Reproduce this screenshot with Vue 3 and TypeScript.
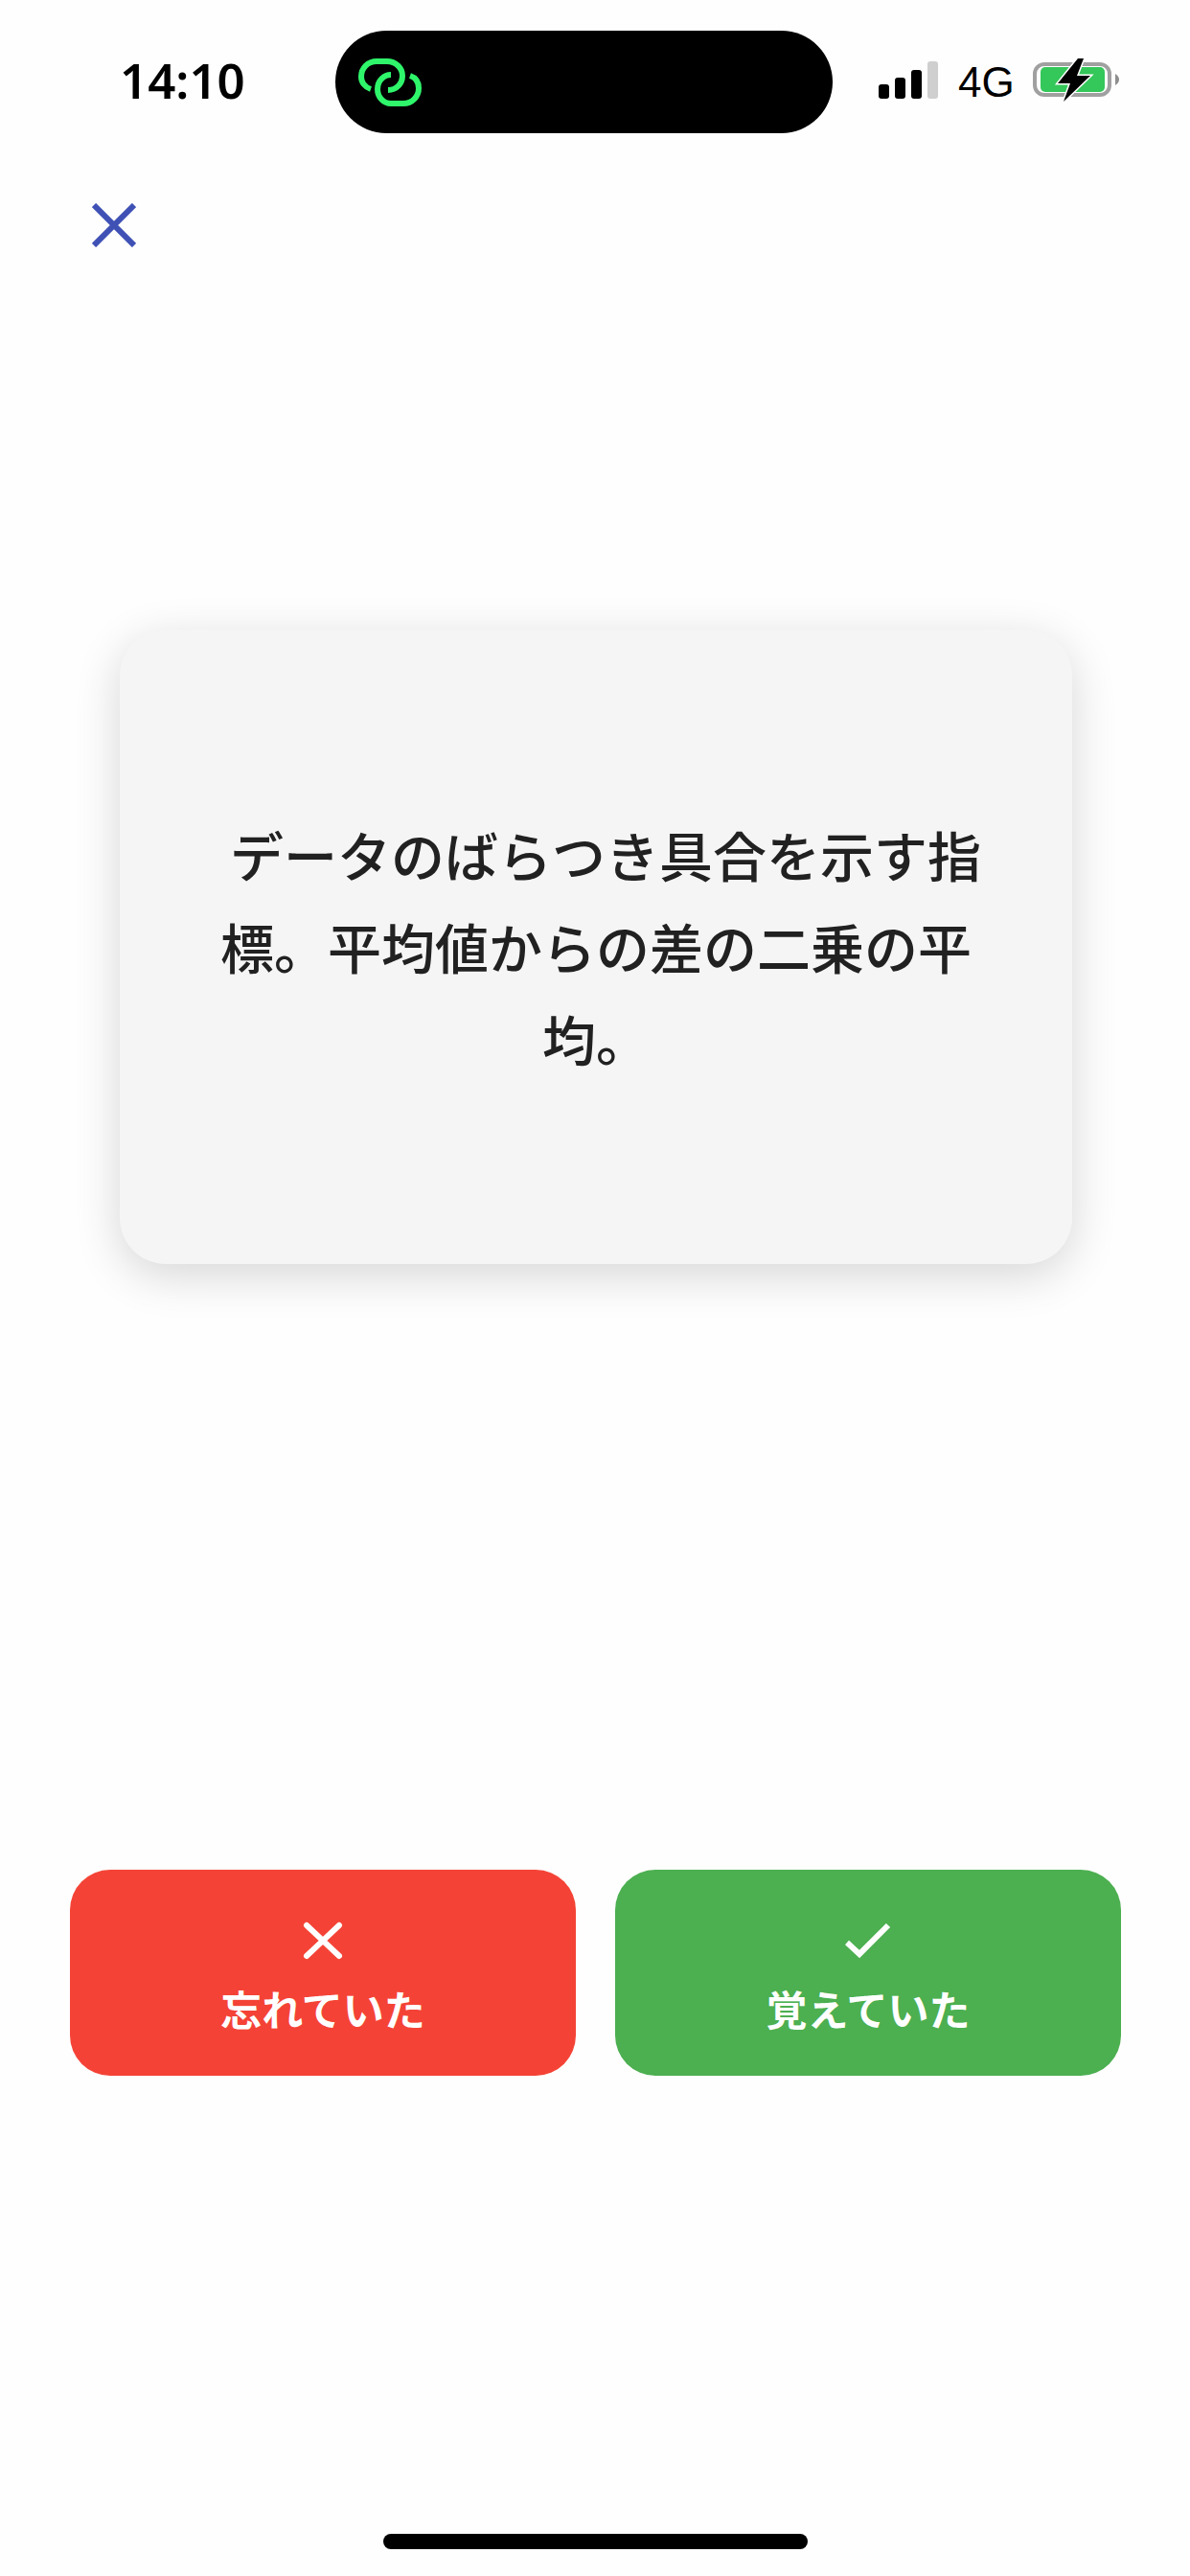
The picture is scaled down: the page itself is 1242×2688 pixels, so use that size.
<script setup lang="ts">
const barHeights = [15, 22, 30, 39]
const cardText = 'データのばらつき具合を示す指標。平均値からの差の二乗の平均。'
</script>

<template>
  <div class="screen">
    <header class="status-bar">
      <div class="time">14:10</div>
      <div class="island">
        <svg class="link-icon" viewBox="0 0 66 50" fill="none" stroke="#2ff56b" stroke-width="6">
          <path d="M13 32 C7 30 3 25 3 19 C3 10 10 3 19 3 H30 C39 3 46 10 46 18 C46 26 40 33 31 33" />
          <path d="M54 18 C60 20 63 25 63 31 C63 40 56 47 47 47 H34 C26 47 20 40 20 32 C20 23 27 17 34 17" />
        </svg>
      </div>
      <div class="status-right">
        <div class="signal">
          <span
            v-for="(h, i) in barHeights"
            :key="i"
            class="bar"
            :class="{ off: i === 3 }"
            :style="{ height: h + 'px' }"
          ></span>
        </div>
        <span class="net">4G</span>
        <svg class="battery" width="92" height="46" viewBox="0 0 92 46">
          <rect x="2" y="7" width="78" height="32" rx="10" fill="none" stroke="#a0a0a0" stroke-width="4" />
          <rect x="8" y="10" width="67" height="26" rx="5" fill="#34c759" />
          <path d="M86 17 C89 19 90 21 90 23 C90 25 89 27 86 29 Z" fill="#8e8e8e" />
          <path
            d="M47 1 L26 27 H39 L32 46 L60 19 H46 L53 1 Z"
            fill="#000"
            stroke="#fff"
            stroke-width="3"
            paint-order="stroke"
          />
        </svg>
      </div>
    </header>

    <div class="toolbar">
      <button class="close-btn" aria-label="閉じる">
        <svg width="46" height="46" viewBox="0 0 46 46" stroke="#3f51b5" stroke-width="6">
          <path d="M2 2 L44 44 M44 2 L2 44" />
        </svg>
      </button>
    </div>

    <main class="card-area">
      <div class="card">
        <p class="card-text">{{ cardText }}</p>
      </div>
    </main>

    <div class="actions">
      <button class="action forgot">
        <svg width="48" height="40" viewBox="0 0 48 40" fill="none" stroke="#fff" stroke-width="6" stroke-linecap="round">
          <path d="M7 4 L41 36 M41 4 L7 36" />
        </svg>
        <span>忘れていた</span>
      </button>
      <button class="action remembered">
        <svg width="48" height="40" viewBox="0 0 48 40" fill="none" stroke="#fff" stroke-width="6">
          <path d="M2 22 L15 34 L45 4" />
        </svg>
        <span>覚えていた</span>
      </button>
    </div>

    <div class="home-indicator"></div>
  </div>
</template>

<style>
html,
body {
  margin: 0;
  background: #fefefe;
}
</style>

<style scoped>
.screen {
  width: 1242px;
  height: 2688px;
  background: #fefefe;
  display: flex;
  flex-direction: column;
  font-family: Inter, "Noto Sans CJK JP", sans-serif;
  color: #000;
  overflow: hidden;
}

.status-bar {
  display: grid;
  grid-template-columns: 350px 519px 373px;
  align-items: center;
  padding-top: 32px;
  height: 107px;
  flex: none;
}

.time {
  padding: 0 0 6px 125px;
  font-size: 51px;
  font-weight: 600;
  font-family: "Noto Sans", sans-serif;
  line-height: 60px;
}

.island {
  height: 107px;
  background: #000;
  border-radius: 54px;
  display: flex;
  align-items: center;
  padding-left: 24px;
  box-sizing: border-box;
}

.link-icon {
  width: 66px;
  height: 50px;
}

.status-right {
  display: flex;
  align-items: center;
  padding: 0 0 5px 48px;
}

.signal {
  display: flex;
  align-items: flex-end;
  gap: 6px;
  height: 39px;
}

.bar {
  width: 11px;
  background: #000;
  border-radius: 3px;
}

.bar.off {
  background: #cfcfcf;
}

.net {
  margin: 6px 0 0 21px;
  font-size: 44px;
  line-height: 46px;
  width: 78px;
  font-family: "Liberation Sans", sans-serif;
}

.battery {
  display: block;
}

.toolbar {
  flex: none;
  padding: 73px 0 0 96px;
}

.close-btn {
  display: block;
  padding: 0;
  border: 0;
  background: none;
  width: 46px;
  height: 46px;
}

.close-btn svg {
  display: block;
}

.card-area {
  flex: none;
  padding: 399px 123px 0 125px;
}

.card {
  height: 662px;
  background: #f5f5f5;
  border-radius: 48px;
  box-shadow: 0 12px 48px rgba(0, 0, 0, 0.16);
  display: flex;
  align-items: center;
  justify-content: center;
  padding: 0 90px;
}

.card-text {
  margin: 6px 0 0;
  font-size: 56px;
  font-weight: 500;
  line-height: 96px;
  text-align: center;
  text-indent: 20px;
  color: #212121;
}

.actions {
  flex: none;
  display: grid;
  grid-template-columns: 528px 528px;
  column-gap: 41px;
  padding: 632px 0 0 73px;
}

.action {
  height: 215px;
  border: 0;
  border-radius: 42px;
  color: #fff;
  display: flex;
  flex-direction: column;
  align-items: center;
  justify-content: flex-start;
  padding: 54px 0 0;
  gap: 28px;
  font-family: inherit;
  font-size: 43px;
  font-weight: 700;
  line-height: 50px;
}

.action svg {
  display: block;
}

.forgot {
  background: #f44336;
}

.remembered {
  background: #4caf50;
}

.home-indicator {
  flex: none;
  width: 443px;
  height: 16px;
  margin: 478px 0 0 400px;
  background: #000;
  border-radius: 8px;
}
</style>
